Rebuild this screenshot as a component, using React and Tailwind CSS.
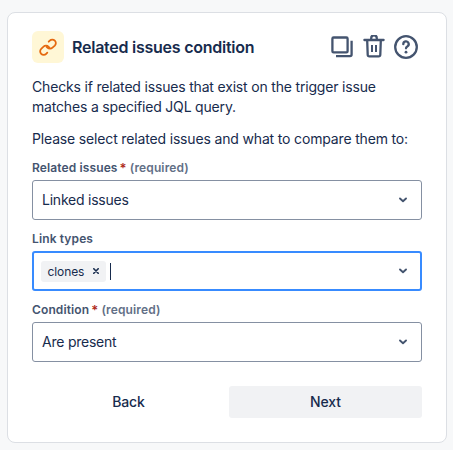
const selects = [
  { label: "Related issues", required: true, value: "Linked issues" },
  { label: "Link types", tags: ["clones"], focused: true },
  { label: "Condition", required: true, value: "Are present" },
];

function LinkIcon() {
  return (
    <svg width="20" height="20" viewBox="0 0 20 20" fill="none" stroke="#e56910" strokeWidth="1.8" strokeLinecap="round">
      <path d="M10.7 4.7 11.8 3.6a3.5 3.5 0 0 1 5 0 3.5 3.5 0 0 1 0 5l-2.3 2.1a3.6 3.6 0 0 1-5.1-.1L8.6 9.8" />
      <path d="M9.3 15.7 8.2 16.8a3.5 3.5 0 0 1-5 0 3.5 3.5 0 0 1 0-5l2.3-2.1a3.6 3.6 0 0 1 5.1.1l.8.8" />
    </svg>
  );
}

function CopyIcon() {
  return (
    <svg width="24" height="24" viewBox="0 0 24 24" fill="none" stroke="#44546f" strokeWidth="2.3">
      <rect x="2.4" y="2.5" width="15.2" height="14.9" rx="1.2" />
      <path d="M21.6 5.8v13.7a1.6 1.6 0 0 1-1.6 1.6H6" />
    </svg>
  );
}

function TrashIcon() {
  return (
    <svg width="24" height="24" viewBox="0 0 24 24" fill="none" stroke="#44546f" strokeWidth="2.3">
      <path d="M2.4 5h19.2" strokeLinecap="round" />
      <path d="M9.2 4.8V3.2a2.8 2.8 0 0 1 5.6 0v1.6" />
      <path d="M5.2 5.5 5.7 19.7a1.7 1.7 0 0 0 1.7 1.6h9.2a1.7 1.7 0 0 0 1.7-1.6L18.8 5.5" />
      <path d="M10 9.9v7.2M14 9.9v7.2" strokeWidth="2" />
    </svg>
  );
}

function HelpIcon() {
  return (
    <svg width="24" height="24" viewBox="0 0 24 24" fill="none" stroke="#44546f" strokeWidth="2.3">
      <circle cx="12" cy="12" r="10.8" />
      <path d="M9.3 9.2a2.7 2.7 0 1 1 4 2.3c-.9.5-1.3.9-1.3 1.8" strokeLinecap="round" />
      <circle cx="12" cy="17.2" r="1.4" fill="#44546f" stroke="none" />
    </svg>
  );
}

function Chevron() {
  return (
    <svg width="8" height="6" viewBox="0 0 8 6" fill="none" stroke="#44546f" strokeWidth="1.9" strokeLinecap="round" strokeLinejoin="round">
      <path d="M1 1.5 4 4.2l3-2.7" />
    </svg>
  );
}

function SelectField({ label, required, value, tags, focused }) {
  return (
    <div>
      <div className="flex h-4 items-center text-[12px] font-semibold tracking-[0.12px] text-[#44546f]">
        <span>{label}</span>
        {required && (
          <>
            <span className="ml-0.5 text-[13px] text-[#ae2a19]">*</span>
            <span className="ml-[3px] text-[#626f86]">(required)</span>
          </>
        )}
      </div>
      <div
        className={
          focused
            ? "mt-1 flex h-10 items-center rounded-[3px] border-2 border-[#388bff] pr-[13px] pl-[7px]"
            : "mt-1 flex h-10 items-center rounded-[3px] border border-[#8590a2] pr-3.5 pl-[9px]"
        }
      >
        {value && <span className="tracking-[-0.23px]">{value}</span>}
        {tags?.map((tag) => (
          <span key={tag} className="flex h-[21px] w-[65px] items-center justify-between rounded-[3px] bg-[#f1f2f4] pr-[7px] pl-[6.5px] text-[12px] tracking-[-0.1px]">
            <span className="pt-px">{tag}</span>
            <svg width="6" height="6" viewBox="0 0 6 6" stroke="#172b4d" strokeWidth="1.6" strokeLinecap="round">
              <path d="m.8.8 4.4 4.4M5.2.8.8 5.2" />
            </svg>
          </span>
        ))}
        {focused && <span className="ml-1 h-[17px] w-px bg-[#172b4d]" />}
        <span className="ml-auto">
          <Chevron />
        </span>
      </div>
    </div>
  );
}

export default function App() {
  return (
    <div className="h-[450px] w-[453px] bg-[#f7f8f9] pt-3 pl-[7px] font-['Inter',sans-serif] text-[14px] leading-5 text-[#172b4d]">
      <section className="h-[431px] w-[440px] rounded-[8px] border border-[#dcdfe4] bg-white px-6 pt-[18px]">
        <header className="flex items-center">
          <div className="flex h-8 w-8 items-center justify-center rounded-[6px] bg-[#fff7d6]">
            <LinkIcon />
          </div>
          <h1 className="ml-2 text-[16px] font-semibold tracking-[-0.25px] whitespace-nowrap">Related issues condition</h1>
          <div className="mr-1 ml-auto flex gap-2">
            <CopyIcon />
            <TrashIcon />
            <HelpIcon />
          </div>
        </header>

        <p className="mt-3.5 tracking-[-0.18px] whitespace-nowrap">
          Checks if related issues that exist on the trigger issue
          <br />
          matches a specified JQL query.
        </p>
        <p className="mt-3 tracking-[-0.16px] whitespace-nowrap">Please select related issues and what to compare them to:</p>

        <div className="mt-[11px] flex flex-col gap-[11px]">
          {selects.map((field) => (
            <SelectField key={field.label} {...field} />
          ))}
        </div>

        <div className="mt-6 flex gap-1 font-medium tracking-[-0.1px]">
          <button className="h-8 flex-1 rounded-[3px]">Back</button>
          <button className="h-8 flex-1 rounded-[3px] bg-[#f1f2f4]">Next</button>
        </div>
      </section>
    </div>
  );
}
